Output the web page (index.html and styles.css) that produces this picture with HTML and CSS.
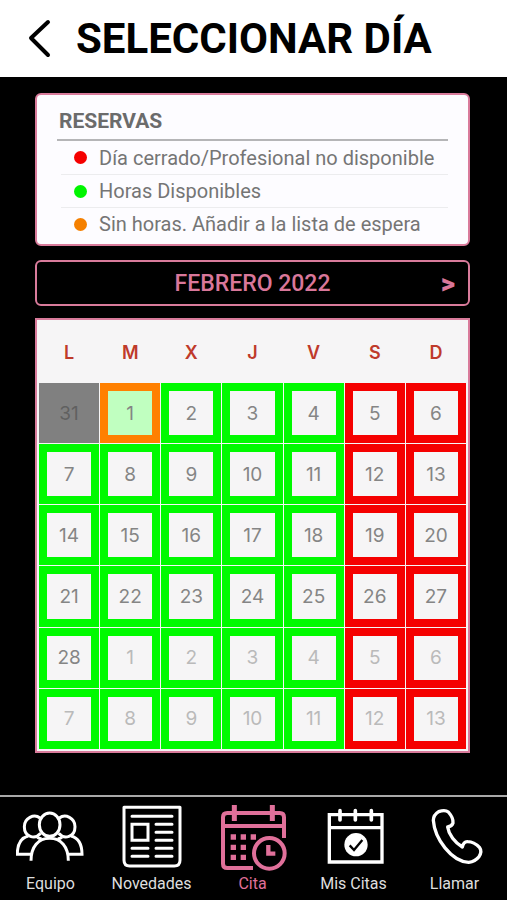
FILE: index.html
```html
<!DOCTYPE html>
<html lang="es">
<head>
<meta charset="utf-8">
<meta name="viewport" content="width=device-width, initial-scale=1">
<title>Seleccionar día</title>
<link rel="stylesheet" href="styles.css">
</head>
<body>
<header class="topbar">
  <button class="back" type="button" aria-label="Volver">
    <svg viewBox="0 0 24 40" width="24" height="40"><path d="M20 3 3 19 20 36"/></svg>
  </button>
  <h1>SELECCIONAR DÍA</h1>
</header>
<main>
  <section class="legend">
    <h2>RESERVAS</h2>
    <ul>
      <li><span class="dot closed"></span>Día cerrado/Profesional no disponible</li>
      <li><span class="dot open"></span>Horas Disponibles</li>
      <li><span class="dot full"></span>Sin horas. Añadir a la lista de espera</li>
    </ul>
  </section>
  <div class="month">
    <span class="month-name">FEBRERO 2022</span>
    <button class="next" type="button" aria-label="Mes siguiente">&gt;</button>
  </div>
  <table class="calendar">
    <thead>
      <tr><th>L</th><th>M</th><th>X</th><th>J</th><th>V</th><th>S</th><th>D</th></tr>
    </thead>
    <tbody>
      <tr><td><button class="past" disabled>31</button></td><td><button class="full today">1</button></td><td><button class="open">2</button></td><td><button class="open">3</button></td><td><button class="open">4</button></td><td><button class="closed">5</button></td><td><button class="closed">6</button></td></tr>
      <tr><td><button class="open">7</button></td><td><button class="open">8</button></td><td><button class="open">9</button></td><td><button class="open">10</button></td><td><button class="open">11</button></td><td><button class="closed">12</button></td><td><button class="closed">13</button></td></tr>
      <tr><td><button class="open">14</button></td><td><button class="open">15</button></td><td><button class="open">16</button></td><td><button class="open">17</button></td><td><button class="open">18</button></td><td><button class="closed">19</button></td><td><button class="closed">20</button></td></tr>
      <tr><td><button class="open">21</button></td><td><button class="open">22</button></td><td><button class="open">23</button></td><td><button class="open">24</button></td><td><button class="open">25</button></td><td><button class="closed">26</button></td><td><button class="closed">27</button></td></tr>
      <tr><td><button class="open">28</button></td><td><button class="open other">1</button></td><td><button class="open other">2</button></td><td><button class="open other">3</button></td><td><button class="open other">4</button></td><td><button class="closed other">5</button></td><td><button class="closed other">6</button></td></tr>
      <tr><td><button class="open other">7</button></td><td><button class="open other">8</button></td><td><button class="open other">9</button></td><td><button class="open other">10</button></td><td><button class="open other">11</button></td><td><button class="closed other">12</button></td><td><button class="closed other">13</button></td></tr>
    </tbody>
  </table>
</main>
<nav class="tabs">
  <a href="#equipo">
    <svg viewBox="46 45 210 192" width="70" height="64" fill="none" stroke="currentColor" stroke-width="9">
      <ellipse cx="147" cy="104" rx="31" ry="35"/>
      <path d="M118 84c-18-14-47 0-47 26 0 31 32 40 49 20M176 84c18-14 47 0 47 26 0 31-32 40-49 20"/>
      <path d="M91 212c0-42 22-67 56-67s56 25 56 67"/>
      <path d="M91 193H50c0-27 10-49 33-55M203 193h41c0-27-10-49-33-55"/>
      <path d="M110 142c4 3 8 4 13 4M184 142c-4 3-8 4-13 4"/>
    </svg>
    <span>Equipo</span>
  </a>
  <a href="#novedades">
    <svg viewBox="349 45 210 192" width="70" height="64" fill="none" stroke="currentColor" stroke-width="9" stroke-linecap="round">
      <path d="M370 52H538V211q0 17-17 17H387q-17 0-17-17Z" stroke-linejoin="round"/>
      <path d="M394 79H514M466 103h48M466 127h48M466 151h48M466 175h48M466 199h48M394 175h48M394 199h48"/>
      <path d="M394 103h48v48h-48Z"/>
    </svg>
    <span>Novedades</span>
  </a>
  <a class="active" href="#cita" aria-current="page">
    <svg viewBox="54 42 210 198" width="70" height="66" fill="none" stroke="currentColor" stroke-width="12">
      <path d="M159 231H82q-13 0-13-13V79q0-13 13-13H239q13 0 13 13v62M69 105H252"/>
      <path d="M103 42v48M217 42v48" stroke-width="15"/>
      <path d="M92 138h76M92 169h48M92 199h48" stroke-width="16" stroke-dasharray="16 14"/>
      <circle cx="208" cy="187" r="46"/>
      <path d="M205 162v26h21" stroke-width="13"/>
    </svg>
    <span>Cita</span>
  </a>
  <a href="#mis-citas">
    <svg viewBox="355 45 210 192" width="70" height="64" fill="none" stroke="currentColor" stroke-width="10">
      <path d="M386 74H544V216H386ZM386 113H544"/>
      <path d="M418 62v28M464 62v28M512 62v28" stroke-width="11" stroke-linecap="round"/>
      <circle cx="466" cy="164" r="35" fill="currentColor" stroke="none"/>
      <path class="tick" d="M447 166l13 14 25-30" stroke-width="7"/>
    </svg>
    <span>Mis Citas</span>
  </a>
  <a href="#llamar">
    <svg viewBox="119 45 210 192" width="70" height="64" fill="none" stroke="currentColor" stroke-width="10" stroke-linejoin="round">
      <path d="M175 65Q194 58 204 66Q220 84 218 99Q215 109 202 111C205 134 224 158 246 171Q250 154 262 155Q281 155 298 173Q306 184 296 200Q285 214 265 217C213 214 163 146 159 91Q159 75 175 65Z"/>
    </svg>
    <span>Llamar</span>
  </a>
</nav>
</body>
</html>
```
FILE: styles.css
```css
* {
  box-sizing: border-box;
}

body {
  margin: 0;
  min-height: 100vh;
  display: flex;
  flex-direction: column;
  background: #000;
  font-family: Roboto, "Liberation Sans", sans-serif;
}

button {
  margin: 0;
  padding: 0;
  border: 0;
  background: none;
  font: inherit;
  color: inherit;
}

.topbar {
  display: flex;
  align-items: center;
  gap: 24px;
  height: 77px;
  padding: 0 28px;
  background: #fff;
}

.back {
  display: flex;
}

.back path {
  fill: none;
  stroke: #000;
  stroke-width: 4;
  stroke-linecap: round;
  stroke-linejoin: round;
}

h1 {
  margin: 0;
  font-size: 42px;
  line-height: 48px;
  font-weight: 700;
  white-space: nowrap;
}

main {
  flex: 1;
  display: flex;
  flex-direction: column;
  padding: 16px 37px 16px 35px;
}

.legend {
  padding: 12px 20px 4px;
  border: 2px solid #d97b9b;
  border-radius: 6px;
  background: #fdfcff;
  color: #757575;
}

h2 {
  margin: 0;
  padding: 0 2px 4px;
  border-bottom: 2px solid #b5b5b7;
  font-size: 21px;
  line-height: 28px;
  font-weight: 700;
  color: #6b6b6b;
}

ul {
  margin: 0;
  padding: 0 0 0 4px;
  list-style: none;
}

li {
  display: flex;
  align-items: center;
  gap: 12px;
  height: 33px;
  padding-left: 13px;
  font-size: 20px;
  white-space: nowrap;
}

li + li {
  border-top: 1px solid #ececee;
}

.dot {
  width: 13px;
  height: 13px;
  border-radius: 50%;
}

.dot.closed { background: #f50000; }
.dot.open { background: #00f500; }
.dot.full { background: #f58000; }

.month {
  display: grid;
  grid-template-columns: 1fr auto 1fr;
  align-items: center;
  height: 46px;
  margin: 14px 0 12px;
  padding: 0 13px;
  border: 2px solid #d97b9b;
  border-radius: 6px;
  color: #d9779a;
  font-size: 23px;
  font-weight: 500;
}

.month-name {
  grid-column: 2;
}

.next {
  justify-self: end;
  font-size: 28px;
  font-weight: 900;
}

.calendar {
  width: 100%;
  table-layout: fixed;
  border: 2px solid #d97b9b;
  border-spacing: 1px;
  padding: 1px;
  background: #f6f5f6;
  font-family: Inter, "Liberation Sans", sans-serif;
}

th {
  height: 60px;
  padding: 0;
  font-size: 18px;
  font-weight: 600;
  color: #bf3a2b;
}

td {
  padding: 0;
}

td button {
  display: block;
  width: 100%;
  aspect-ratio: 1;
  border: 8px solid;
  font-size: 19px;
  color: #858585;
}

td .open { border-color: #00fa00; }
td .closed { border-color: #f50000; }
td .full { border-color: #ff8000; }
td .today { background: #c0ffc0; }
td .other { color: #bababa; }

td .past {
  border-color: #808080;
  background: #808080;
  color: #606060;
}

.tabs {
  display: flex;
  height: 105px;
  padding: 8px 2px 0 0;
  border-top: 2px solid #a8a8a8;
}

.tabs a {
  flex: 1;
  display: flex;
  flex-direction: column;
  align-items: center;
  justify-content: space-between;
  padding-bottom: 6px;
  color: #fff;
  font-size: 16px;
  line-height: 20px;
  text-decoration: none;
}

.tabs span {
  color: #dedede;
}

.tabs .active,
.tabs .active span {
  color: #e0709a;
}

.tick {
  stroke: #000;
}
```
